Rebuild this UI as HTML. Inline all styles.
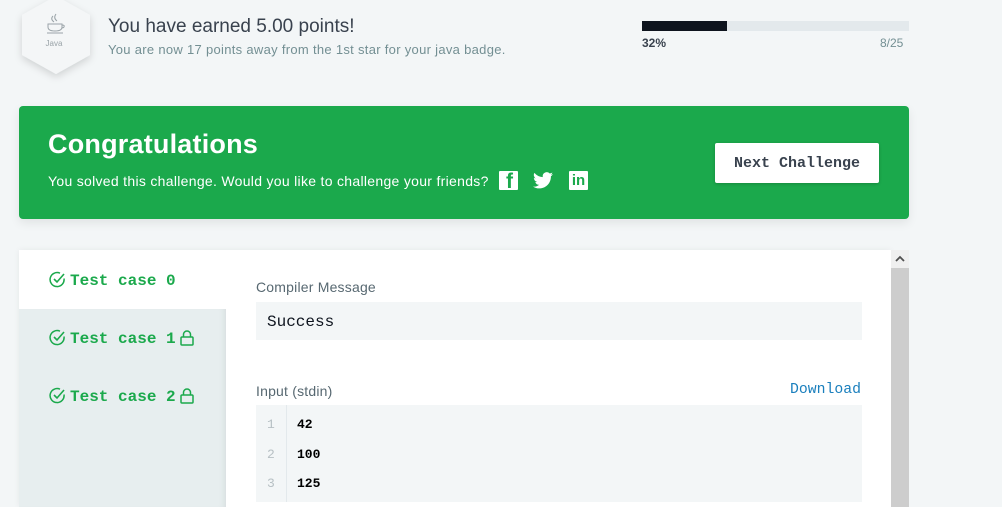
<!DOCTYPE html>
<html><head><style>
*{margin:0;padding:0;box-sizing:border-box}
body{width:1002px;height:507px;overflow:hidden;background:#f3f6f7;font-family:"Liberation Sans",sans-serif;position:relative}
.abs{position:absolute}
.mono{font-family:"Liberation Mono",monospace}
.tc{position:absolute;left:49px;font-family:"Liberation Mono",monospace;font-size:16px;font-weight:bold;color:#1ba94c;line-height:20px;white-space:nowrap}
.tc svg{vertical-align:-3px}
.tc svg.ck{margin-right:4px}
</style></head><body>
<svg class="abs" style="left:14px;top:-8px" width="84" height="92" viewBox="0 0 84 92">
<defs><filter id="s" x="-30%" y="-30%" width="160%" height="160%"><feDropShadow dx="0" dy="3" stdDeviation="4" flood-color="#000" flood-opacity="0.15"/></filter></defs>
<polygon points="42,4 76,23 76,63 42,82 8,63 8,23" fill="#f4f6f7" filter="url(#s)"/>
<path d="M39 24 q-3 3 1 6 M42 22 q-3 4 1 7" stroke="#9aa3a8" fill="none" stroke-width="1"/>
<path d="M34 32 h14 v3 q0 4 -7 4 q-7 0 -7 -4z M48 33 q3 0 2 2 q-1 1 -2 1 M33 41 h16" stroke="#9aa3a8" fill="none" stroke-width="1"/>
<text x="40" y="54" font-size="8" fill="#9aa3a8" text-anchor="middle" font-family="Liberation Sans">Java</text>
</svg>
<div class="abs" style="left:108px;top:16px;font-size:19px;color:#39424e">You have earned 5.00 points!</div>
<div class="abs" style="left:108px;top:42px;font-size:13px;color:#738f93;letter-spacing:0.3px">You are now 17 points away from the 1st star for your java badge.</div>
<div class="abs" style="left:642px;top:21px;width:267px;height:10px;background:#e3e9ec"></div>
<div class="abs" style="left:642px;top:21px;width:85px;height:10px;background:#0e141e"></div>
<div class="abs" style="left:642px;top:36px;font-size:12px;font-weight:bold;color:#39424e">32%</div>
<div class="abs" style="left:880px;top:36px;font-size:12px;color:#738f93">8/25</div>

<div class="abs" style="left:19px;top:106px;width:890px;height:113px;background:#1ba94c;border-radius:4px;box-shadow:0 4px 10px rgba(0,0,0,.08)"></div>
<div class="abs" style="left:48px;top:129px;font-size:27px;font-weight:bold;color:#fff;letter-spacing:0.2px">Congratulations</div>
<div class="abs" style="left:48px;top:173px;font-size:14px;color:#fff;letter-spacing:0.3px">You solved this challenge. Would you like to challenge your friends?</div>
<div class="abs" style="left:499px;top:171px;width:19px;height:19px;background:#fff;border-radius:1px;overflow:hidden"><span style="position:absolute;left:7px;top:-1px;color:#1ba94c;font-weight:bold;font-size:21px">f</span></div>
<svg class="abs" style="left:533px;top:172px" width="20" height="17" viewBox="0 0 24 20"><path fill="#fff" d="M24 2.4a10 10 0 0 1-2.8.8A5 5 0 0 0 23.3.4a10 10 0 0 1-3.1 1.2A4.9 4.9 0 0 0 11.8 6 14 14 0 0 1 1.7.9a4.9 4.9 0 0 0 1.5 6.6A4.9 4.9 0 0 1 1 6.9a4.9 4.9 0 0 0 3.9 4.8 5 5 0 0 1-2.2.1 4.9 4.9 0 0 0 4.6 3.4A9.9 9.9 0 0 1 0 17.3 14 14 0 0 0 7.5 19.5c9.1 0 14-7.5 14-14v-.6A10 10 0 0 0 24 2.4z"/></svg>
<div class="abs" style="left:569px;top:171px;width:19px;height:19px;background:#fff;border-radius:1px;color:#1ba94c;font-weight:bold;font-size:15px;line-height:19px;text-align:center">in</div>
<div class="abs mono" style="left:715px;top:143px;width:164px;height:40px;background:#fff;border-radius:2px;box-shadow:0 1px 3px rgba(0,0,0,.2);font-size:15px;font-weight:bold;color:#39424e;text-align:center;line-height:41px">Next Challenge</div>

<div class="abs" style="left:19px;top:250px;width:872px;height:257px;background:#fff;box-shadow:0 0 6px rgba(0,0,0,.06)"></div>
<div class="abs" style="left:19px;top:309px;width:207px;height:198px;background:#e7eeef;box-shadow:inset -6px 0 8px -6px rgba(0,0,0,.1)"></div>
<div class="abs" style="left:891px;top:250px;width:18px;height:257px;background:#cdcdcd"></div>
<div class="abs" style="left:891px;top:250px;width:18px;height:18px;background:#f0f0f0"></div>
<svg class="abs" style="left:895px;top:255px" width="10" height="8"><path d="M1 6 L5 2 L9 6" stroke="#505050" stroke-width="1.8" fill="none"/></svg>

<div class="tc" style="top:271px"><svg class="ck" width="17" height="17" viewBox="0 0 17 17"><path d="M15 7.5 A7 7 0 1 1 11 2.2" stroke="#1ba94c" stroke-width="1.5" fill="none"/><path d="M5 8 L8 11 L15 3" stroke="#1ba94c" stroke-width="1.6" fill="none"/></svg>Test case 0</div>
<div class="tc" style="top:329px"><svg class="ck" width="17" height="17" viewBox="0 0 17 17"><path d="M15 7.5 A7 7 0 1 1 11 2.2" stroke="#1ba94c" stroke-width="1.5" fill="none"/><path d="M5 8 L8 11 L15 3" stroke="#1ba94c" stroke-width="1.6" fill="none"/></svg>Test case 1<svg width="16" height="17" viewBox="0 0 16 17" style="margin-left:3px"><rect x="2" y="8" width="12" height="8" rx="1" stroke="#1ba94c" stroke-width="1.5" fill="none"/><path d="M4.5 8 V5.5 a3.5 3.5 0 0 1 7 0 V8" stroke="#1ba94c" stroke-width="1.5" fill="none"/></svg></div>
<div class="tc" style="top:387px"><svg class="ck" width="17" height="17" viewBox="0 0 17 17"><path d="M15 7.5 A7 7 0 1 1 11 2.2" stroke="#1ba94c" stroke-width="1.5" fill="none"/><path d="M5 8 L8 11 L15 3" stroke="#1ba94c" stroke-width="1.6" fill="none"/></svg>Test case 2<svg width="16" height="17" viewBox="0 0 16 17" style="margin-left:3px"><rect x="2" y="8" width="12" height="8" rx="1" stroke="#1ba94c" stroke-width="1.5" fill="none"/><path d="M4.5 8 V5.5 a3.5 3.5 0 0 1 7 0 V8" stroke="#1ba94c" stroke-width="1.5" fill="none"/></svg></div>

<div class="abs" style="left:256px;top:279px;font-size:14px;color:#576871;letter-spacing:0.2px">Compiler Message</div>
<div class="abs mono" style="left:256px;top:302px;width:606px;height:38px;background:#f3f6f7;font-size:16px;color:#0e141e;padding-left:11px;line-height:40px">Success</div>
<div class="abs" style="left:256px;top:383px;font-size:14px;color:#576871;letter-spacing:0.2px">Input (stdin)</div>
<div class="abs mono" style="left:790px;top:382px;font-size:14.8px;color:#1a7fbd">Download</div>
<div class="abs mono" style="left:256px;top:405px;width:606px;height:97px;background:#f3f6f7;font-size:13px;line-height:29.5px;padding-top:5px">
<div style="position:absolute;left:30px;top:0;width:1px;height:97px;background:#e3e9ec"></div>
<div><span style="color:#b7c0c4;display:inline-block;width:41px;padding-left:11px">1</span><b>42</b></div>
<div><span style="color:#b7c0c4;display:inline-block;width:41px;padding-left:11px">2</span><b>100</b></div>
<div><span style="color:#b7c0c4;display:inline-block;width:41px;padding-left:11px">3</span><b>125</b></div>
</div>
</body></html>
